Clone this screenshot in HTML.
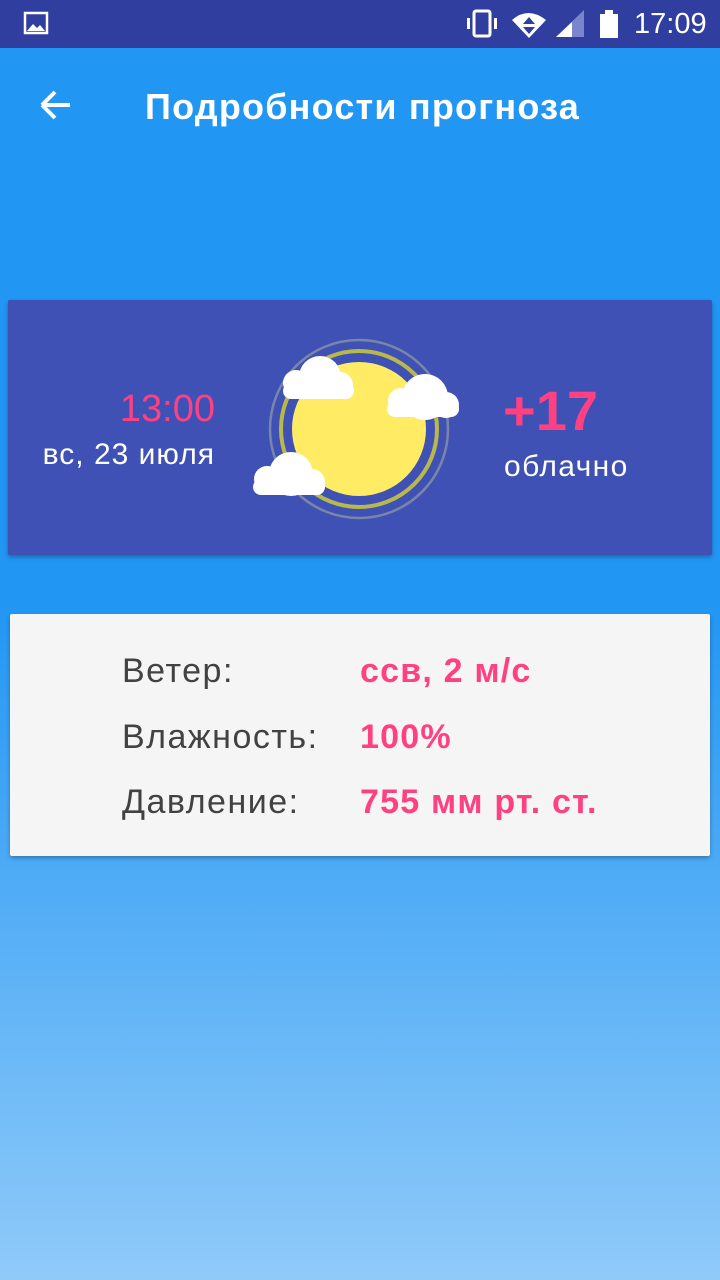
<!DOCTYPE html><html><head><meta charset="utf-8"><style>
body{margin:0;width:720px;height:1280px;position:relative;overflow:hidden;font-family:"Liberation Sans",sans-serif;background:linear-gradient(#2196F3 0px,#2196F3 600px,#90CAF9 1280px)}
.sb{position:absolute;top:0;left:0;width:720px;height:48px;background:#303F9F;color:#fff}
.t{position:absolute;color:#fff}
.card{position:absolute;left:8px;top:300px;width:704px;height:255px;background:#3F51B5;border-radius:2px;box-shadow:0 2px 4px rgba(0,0,0,.3)}
.c2{position:absolute;left:10px;top:614px;width:700px;height:242px;background:#F5F5F5;border-radius:2px;box-shadow:0 2px 4px rgba(0,0,0,.3)}
.l{position:absolute;left:112px;font-size:34px;color:#424242;letter-spacing:1.5px}
.v{position:absolute;left:350px;font-size:34px;font-weight:bold;color:#FF4081;letter-spacing:1.2px}
</style></head><body>
<div class="sb">
<svg width="720" height="48" style="position:absolute;left:0;top:0">
<rect x="25" y="13" width="22" height="20" fill="none" stroke="#fff" stroke-width="2.5"/><path d="M27 31l6-7 4 4 3-3 5 6z" fill="#fff"/>
<rect x="474" y="11" width="16" height="25" rx="2" fill="none" stroke="#fff" stroke-width="3"/><rect x="467" y="18" width="3" height="11" fill="#fff"/><rect x="494" y="18" width="3" height="11" fill="#fff"/>
<path d="M512 20 Q528 6 546 20 L529 38z" fill="#fff"/><path d="M523 24l6-7 6 7zM523 27h12l-6 7z" fill="#303F9F"/>
<path d="M556 37L584 10V37z" fill="#7986CB"/><path d="M556 37L572 22V37z" fill="#fff"/>
<rect x="600" y="14" width="18" height="24" fill="#fff"/><rect x="605" y="10" width="8" height="4" fill="#fff"/>
</svg>
<div class="t" style="left:634px;top:8px;font-size:29px">17:09</div>
</div>
<svg width="40" height="40" style="position:absolute;left:36px;top:85px"><path d="M6 20H34M6 20L19 7M6 20L19 33" stroke="#fff" stroke-width="4" fill="none"/></svg>
<div class="t" style="left:145px;top:86px;font-size:36px;font-weight:bold;letter-spacing:1.2px">Подробности прогноза</div>
<div class="card">
<div style="position:absolute;right:497px;top:88px;font-size:38px;color:#FF4081">13:00</div>
<div style="position:absolute;right:497px;top:138px;font-size:30px;color:#fff;white-space:nowrap;letter-spacing:1px">вс, 23 июля</div>
<div style="position:absolute;left:495px;top:78px;font-size:56px;font-weight:bold;color:#FF4081">+17</div>
<div style="position:absolute;left:496px;top:150px;font-size:30px;color:#fff;letter-spacing:1.4px">облачно</div>
</div>
<svg width="720" height="600" style="position:absolute;left:0;top:0">
<circle cx="359" cy="429" r="89" fill="none" stroke="#7A86A8" stroke-width="2.5"/>
<circle cx="359" cy="429" r="78" fill="none" stroke="#B9B84A" stroke-width="4"/>
<circle cx="359" cy="429" r="67" fill="#FFEB64"/>
<g fill="#fff">
<circle cx="296" cy="383" r="13"/><circle cx="320" cy="377" r="21"/><circle cx="340" cy="385" r="13"/><rect x="283" y="383" width="71" height="16" rx="8"/>
<circle cx="401" cy="401" r="13"/><circle cx="425" cy="397" r="23"/><circle cx="446" cy="405" r="13"/><rect x="387" y="401" width="72" height="16" rx="8"/>
<circle cx="267" cy="479" r="13"/><circle cx="291" cy="474" r="22"/><circle cx="312" cy="482" r="13"/><rect x="253" y="479" width="72" height="16" rx="8"/>
</g></svg>
<div class="c2">
<div class="l" style="top:38px">Ветер:</div><div class="v" style="top:38px">ссв, 2 м/с</div>
<div class="l" style="top:104px">Влажность:</div><div class="v" style="top:104px">100%</div>
<div class="l" style="top:169px">Давление:</div><div class="v" style="top:169px">755 мм рт. ст.</div>
</div>
</body></html>
